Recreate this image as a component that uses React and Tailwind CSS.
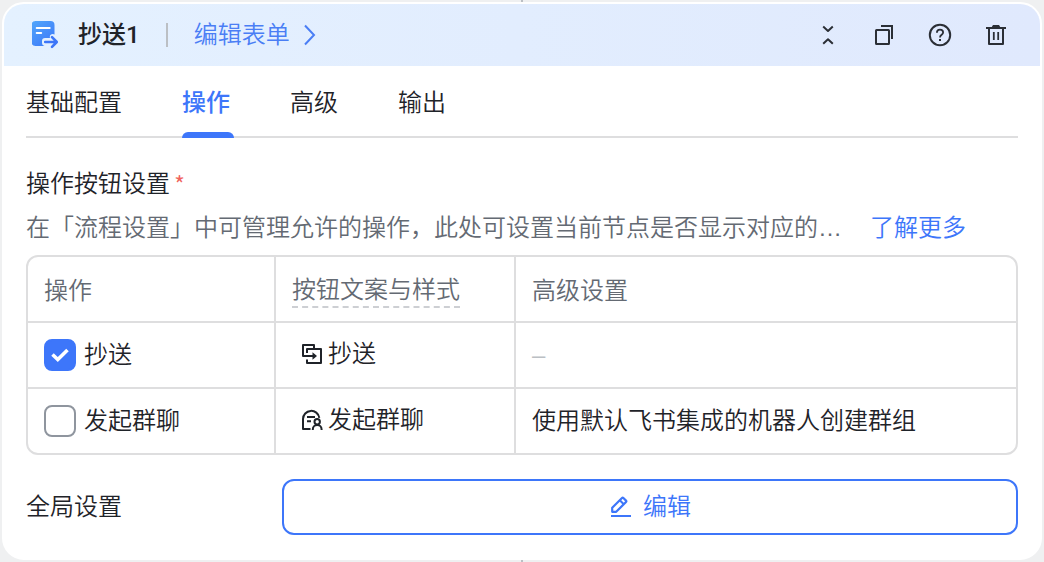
import { useState } from "react";

function DocSendIcon() {
  return (
    <svg width="28" height="28" viewBox="0 0 28 28" fill="none" aria-hidden="true">
      <defs>
        <linearGradient id="doc-fill" x1="2" y1="0" x2="24" y2="26" gradientUnits="userSpaceOnUse">
          <stop stopColor="#50a4fb" />
          <stop offset="1" stopColor="#3b74f8" />
        </linearGradient>
      </defs>
      <path
        d="M3.500 0h15a4 4 0 0 1 4 4v9.500a3 3 0 0 0-4.500 3.500H13a3 3 0 0 0-3 3v2a3 3 0 0 0 2.500 3H3.500a4 4 0 0 1-4-4V4a4 4 0 0 1 4-4Z"
        fill="url(#doc-fill)"
      />
      <path d="M4.700 7h13M4.700 12h4.500" stroke="#fff" strokeWidth="2" strokeLinecap="round" />
      <path
        d="M13.200 21H24.500M20 16.200l4.800 4.800-4.800 4.800"
        stroke="#3d76f8"
        strokeWidth="2.600"
        strokeLinecap="round"
        strokeLinejoin="round"
      />
    </svg>
  );
}

function LineIcon({ children }) {
  return (
    <svg
      width="24"
      height="24"
      viewBox="0 0 24 24"
      fill="none"
      stroke="currentColor"
      strokeWidth="2"
      strokeLinejoin="round"
      className="shrink-0"
      aria-hidden="true"
    >
      {children}
    </svg>
  );
}

function CollapseIcon() {
  return (
    <LineIcon>
      <path d="M7.200 3.500 12 8l4.800-4.500M7.200 20.800l4.800-4.500 4.800 4.500" />
    </LineIcon>
  );
}

function CopyIcon() {
  return (
    <LineIcon>
      <rect x="4" y="7" width="13" height="14" rx="0.500" />
      <path d="M9 3h11v13" strokeLinejoin="miter" />
    </LineIcon>
  );
}

function HelpIcon() {
  return (
    <LineIcon>
      <circle cx="12" cy="12" r="10.200" />
      <path d="M8.900 9.800c0-1.900 1.300-3.100 3.100-3.100s3.100 1.100 3.100 2.800c0 2.300-3.100 2.200-3.100 4.900" strokeWidth="1.800" />
      <path d="M11 15.900h2v2h-2z" fill="currentColor" stroke="none" />
    </LineIcon>
  );
}

function TrashIcon() {
  return (
    <LineIcon>
      <path d="M2 5h20" />
      <path d="M7.500 4.500 9 2h6l1.500 2.500Z" fill="currentColor" stroke="none" />
      <path d="M5 5v16h14V5" />
      <path d="M9.800 9v8M14.200 9v8" strokeWidth="1.800" />
    </LineIcon>
  );
}

function ForwardIcon() {
  return (
    <LineIcon>
      <path d="M14 6.500V3H3v11h11" />
      <path d="M7 11V7h14v14H7v-3.500" />
      <path d="M12.500 10.300 17 14l-4.500 3.700Z" fill="currentColor" stroke="none" />
    </LineIcon>
  );
}

function GroupChatIcon() {
  return (
    <LineIcon>
      <path d="M10.500 21H3V11a8.200 8.200 0 0 1 16.300-1.200" />
      <path d="M7 9h8M7 13.300h4" />
      <circle cx="17.200" cy="13.800" r="2.700" />
      <path d="M12.800 22v-.6a4.400 4.400 0 0 1 8.800 0v.6" />
    </LineIcon>
  );
}

function PencilIcon() {
  return (
    <LineIcon>
      <path d="M3.200 16.800v-4L13 3a1 1 0 0 1 1.400 0l2.600 2.600a1 1 0 0 1 0 1.400L7.200 16.800Z" strokeWidth="2.200" />
      <path d="m10.800 5.200 4 4" />
      <path d="M2 21h20" />
    </LineIcon>
  );
}

const tabs = ["基础配置", "操作", "高级", "输出"];

const tools = [
  { label: "折叠", Icon: CollapseIcon },
  { label: "复制", Icon: CopyIcon },
  { label: "帮助", Icon: HelpIcon },
  { label: "删除", Icon: TrashIcon },
];

const rows = [
  { id: "cc", name: "抄送", Icon: ForwardIcon, extra: null, checked: true },
  { id: "chat", name: "发起群聊", Icon: GroupChatIcon, extra: "使用默认飞书集成的机器人创建群组", checked: false },
];

function Checkbox({ id, defaultChecked }) {
  return (
    <span className="grid size-8 shrink-0 place-items-center">
      <input
        id={id}
        type="checkbox"
        defaultChecked={defaultChecked}
        className="peer col-start-1 row-start-1 size-8 appearance-none rounded-lg border-2 border-[#8f959e] bg-white checked:border-[#3d76fa] checked:bg-[#3d76fa]"
      />
      <svg
        width="20"
        height="16"
        viewBox="0 0 20 16"
        fill="none"
        className="pointer-events-none invisible col-start-1 row-start-1 peer-checked:visible"
        aria-hidden="true"
      >
        <path d="m2.500 7.500 5.300 5L17.500 3" stroke="#fff" strokeWidth="3.600" />
      </svg>
    </span>
  );
}

export default function App() {
  const [active, setActive] = useState("操作");

  return (
    <div className="flex min-h-screen flex-col items-center bg-[#eff0f1] px-[2px] font-['Liberation_Sans','Noto_Sans_CJK_SC',sans-serif] text-2xl leading-9 font-[350] text-[#1f2329]">
      <div className="h-[2px] w-[2px] bg-[#bbbfc4]" />
      <main className="w-full overflow-hidden rounded-[22px] border-2 border-white bg-white">
        <header className="flex h-[62px] items-center bg-linear-to-r from-[#e4f1ff] to-[#e0e9fd] pr-8 pl-7">
          <DocSendIcon />
          <h1 className="ml-[18px] font-['Roboto','Noto_Sans_CJK_SC',sans-serif] font-medium">抄送1</h1>
          <span className="mx-[26px] h-6 w-[2px] bg-[#bbbfc4]" />
          <a href="#form" className="flex items-center gap-[14px] text-[#4a7ef5]">
            编辑表单
            <svg width="12" height="22" viewBox="0 0 12 22" fill="none" stroke="currentColor" strokeWidth="2" aria-hidden="true">
              <path d="m1 1.500 9 9.500-9 9.500" />
            </svg>
          </a>
          <div className="ml-auto flex gap-8 text-[#2b2f36]">
            {tools.map(({ label, Icon }) => (
              <button key={label} type="button" aria-label={label}>
                <Icon />
              </button>
            ))}
          </div>
        </header>

        <div className="px-[22px] pb-[23px]">
          <nav role="tablist" className="flex h-[72px] gap-[60px] border-b-2 border-[#dededf]">
            {tabs.map((tab) => (
              <button
                key={tab}
                type="button"
                role="tab"
                aria-selected={active === tab}
                onClick={() => setActive(tab)}
                className={active === tab ? "relative pt-1 font-medium text-[#3d76fa]" : "relative pt-1"}
              >
                {tab}
                {active === tab && <span className="absolute -right-1 -bottom-[2px] left-0 h-[6px] rounded-t-md bg-[#3d76fa]" />}
              </button>
            ))}
          </nav>

          <h2 className="mt-7 flex gap-1">
            操作按钮设置
            <span className="font-['Noto_Sans_CJK_SC',sans-serif] text-[#f0645c]">*</span>
          </h2>
          <div className="mt-2 flex gap-[26px] pr-[52px] text-[#646a73]">
            <p className="min-w-0 flex-1 truncate">在「流程设置」中可管理允许的操作，此处可设置当前节点是否显示对应的…</p>
            <a href="#more" className="shrink-0 text-[#3d76fa]">
              了解更多
            </a>
          </div>

          <table className="mt-[9px] w-full table-fixed border-separate border-spacing-0 rounded-xl border-2 border-[#dededf] text-left [&_tr:last-child>td]:border-b-0 [&_tr>*:last-child]:border-r-0">
            <colgroup>
              <col className="w-[248px]" />
              <col className="w-[240px]" />
              <col />
            </colgroup>
            <thead className="leading-8 text-[#646a73]">
              <tr className="h-[66px]">
                <th className="border-r-2 border-b-2 border-[#dededf] px-4 pt-1 font-[350]">操作</th>
                <th className="border-r-2 border-b-2 border-[#dededf] px-4 pt-1 font-[350]">
                  <span className="inline-block border-b-2 border-dashed border-[#cdcfd3] align-middle">按钮文案与样式</span>
                </th>
                <th className="border-r-2 border-b-2 border-[#dededf] px-4 pt-1 font-[350]">高级设置</th>
              </tr>
            </thead>
            <tbody>
              {rows.map(({ id, name, Icon, extra, checked }) => (
                <tr key={id} className="h-[66px] last:h-16">
                  <td className="border-r-2 border-b-2 border-[#dededf] px-4">
                    <div className="flex items-center gap-2">
                      <Checkbox id={id} defaultChecked={checked} />
                      <label htmlFor={id}>{name}</label>
                    </div>
                  </td>
                  <td className="border-r-2 border-b-2 border-[#dededf] px-6 pb-[2px]">
                    <div className="flex items-center gap-1">
                      <Icon />
                      {name}
                    </div>
                  </td>
                  <td className="border-r-2 border-b-2 border-[#dededf] px-4">
                    {extra || <span className="text-[#bbbfc4]">–</span>}
                  </td>
                </tr>
              ))}
            </tbody>
          </table>

          <div className="mt-6 flex items-center">
            <span className="w-64 shrink-0">全局设置</span>
            <button
              type="button"
              className="flex h-14 flex-1 items-center justify-center gap-[10px] rounded-xl border-2 border-[#3d76fa] text-[#3d76fa]"
            >
              <PencilIcon />
              编辑
            </button>
          </div>
        </div>
      </main>
      <div className="h-[3px] w-[2px] bg-[#bbbfc4]" />
    </div>
  );
}
